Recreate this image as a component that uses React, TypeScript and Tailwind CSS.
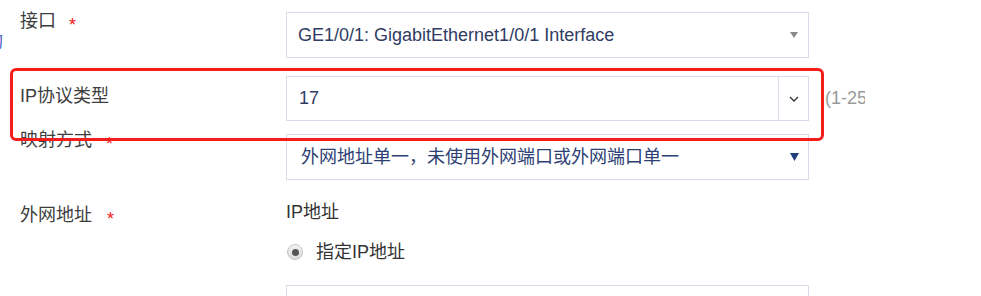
import React from "react";

const font = { fontFamily: '"Liberation Sans", "Noto Sans CJK SC", Arial, sans-serif' };

function Star({ ml }: { ml: string }) {
  return <span className={`text-[#f01818] text-[18px] leading-none ${ml} mt-[7px]`}>*</span>;
}

export default function App() {
  return (
    <div className="relative w-[981px] h-[296px] overflow-hidden bg-white" style={font}>
      <span className="absolute left-[-15px] top-[30px] text-[18px] leading-[24px] text-[#5266c8]">询</span>

      <div className="flex flex-col pt-[12px] text-[18px]">
        {/* Row 1 */}
        <div className="flex items-start">
          <div className="w-[286px] pl-[20px] flex items-center h-[24px] mt-[-3px] text-[#3d3d3d]">
            <span>接口</span>
            <Star ml="ml-[13px]" />
          </div>
          <div className="w-[523px] h-[46px] border border-[#d6dcea] flex items-center pl-[11px] pr-[10px] text-[#2f3c63]">
            <span className="flex-1">GE1/0/1: GigabitEthernet1/0/1 Interface</span>
            <svg width="8" height="6" viewBox="0 0 8 6"><path d="M0 0 L8 0 L4 6 Z" fill="#8a8a8a" /></svg>
          </div>
        </div>

        {/* Row 2 */}
        <div className="flex items-start mt-[18px]">
          <div className="w-[286px] pl-[20px] flex items-center h-[24px] mt-[8px] text-[#3d3d3d]">
            <span>IP协议类型</span>
          </div>
          <div className="w-[523px] h-[45px] border border-[#d6dcea] flex items-stretch text-[#2f3c63]">
            <span className="flex-1 flex items-center pl-[12px]">17</span>
            <div className="w-[30px] border-l border-[#d6dcea] flex items-center justify-center">
              <svg width="10" height="6" viewBox="0 0 10 6"><path d="M1 1 L5 5 L9 1" fill="none" stroke="#333" strokeWidth="1.3" /></svg>
            </div>
          </div>
          <div className="w-[40px] overflow-hidden whitespace-nowrap ml-[16px] h-[45px] flex items-center text-[#9a9a9a]">
            (1-255)
          </div>
        </div>

        {/* Row 3 */}
        <div className="flex items-start mt-[13px]">
          <div className="w-[286px] pl-[20px] flex items-center h-[24px] mt-[-6px] text-[#3d3d3d]">
            <span>映射方式</span>
            <Star ml="ml-[14px]" />
          </div>
          <div className="w-[523px] h-[46px] border border-[#d6dcea] flex items-center pl-[14px] pr-[9px] text-[#2d3f74]">
            <span className="flex-1">外网地址单一，未使用外网端口或外网端口单一</span>
            <svg width="9" height="8" viewBox="0 0 9 8"><path d="M0 0 L9 0 L4.5 8 Z" fill="#1f3f7a" /></svg>
          </div>
        </div>

        {/* Row 4 */}
        <div className="flex items-start mt-[20px]">
          <div className="w-[286px] pl-[20px] flex items-center h-[24px] mt-[3px] text-[#3d3d3d]">
            <span>外网地址</span>
            <Star ml="ml-[15px]" />
          </div>
          <div className="flex flex-col w-[523px]">
            <span className="h-[24px] leading-[24px] text-[#333]">IP地址</span>
            <div className="flex items-center h-[24px] mt-[16px] pl-[1px]">
              <span className="w-[16px] h-[16px] rounded-full border border-[#c4c4c4] bg-gradient-to-b from-[#f2f2f2] to-[#dcdcdc] flex items-center justify-center">
                <span className="w-[7px] h-[7px] rounded-full bg-[#555]" />
              </span>
              <span className="ml-[13px] text-[#333]">指定IP地址</span>
            </div>
            <div className="mt-[21px] h-[40px] border border-[#d6dcea]" />
          </div>
        </div>
      </div>

      {/* red annotation box */}
      <div className="absolute left-[10px] top-[68px] w-[814px] h-[73px] border-[3px] border-[#f51c1c] rounded-[6px]" />
    </div>
  );
}
